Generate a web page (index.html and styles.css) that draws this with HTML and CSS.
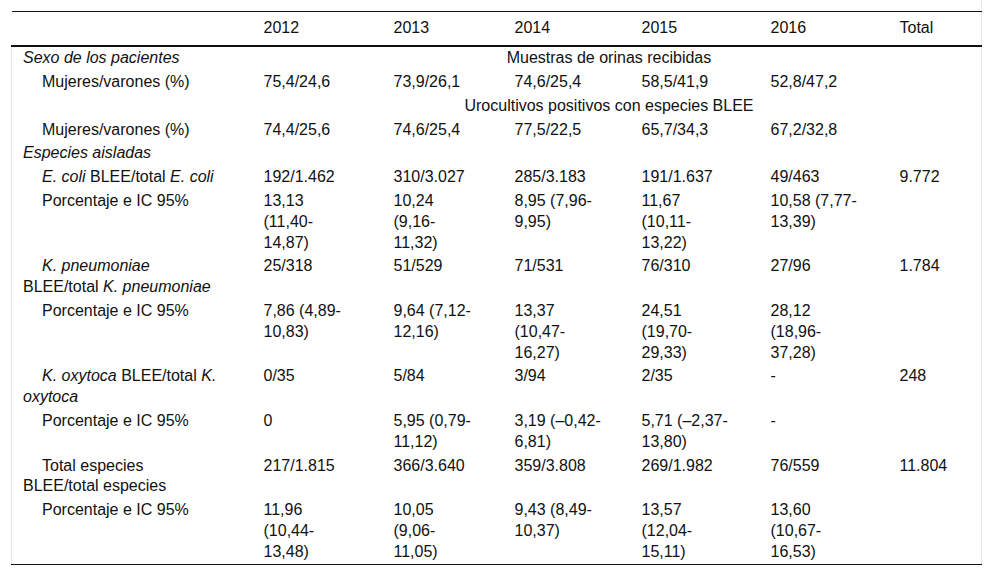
FILE: index.html
```html
<!DOCTYPE html>
<html lang="es">
<head>
<meta charset="utf-8">
<title>Tabla</title>
<link rel="stylesheet" href="styles.css">
</head>
<body>
<div class="wrap">
<table class="t">
<colgroup>
<col class="c-label"><col class="c-2012"><col class="c-2013"><col class="c-2014"><col class="c-2015"><col class="c-2016"><col class="c-total">
</colgroup>
<thead>
<tr><th class="lab"></th><th>2012</th><th>2013</th><th>2014</th><th>2015</th><th>2016</th><th>Total</th></tr>
</thead>
<tbody>
<tr><td class="lab"><i>Sexo de los pacientes</i></td><td class="span" colspan="6">Muestras de orinas recibidas</td></tr>
<tr><td class="lab sub">Mujeres/varones (%)</td><td>75,4/24,6</td><td>73,9/26,1</td><td>74,6/25,4</td><td>58,5/41,9</td><td>52,8/47,2</td><td></td></tr>
<tr><td class="lab"></td><td class="span" colspan="6">Urocultivos positivos con especies BLEE</td></tr>
<tr><td class="lab sub">Mujeres/varones (%)</td><td>74,4/25,6</td><td>74,6/25,4</td><td>77,5/22,5</td><td>65,7/34,3</td><td>67,2/32,8</td><td></td></tr>
<tr><td class="lab"><i>Especies aisladas</i></td><td></td><td></td><td></td><td></td><td></td><td></td></tr>
<tr><td class="lab sub"><i>E. coli</i> BLEE/total <i>E. coli</i></td><td>192/1.462</td><td>310/3.027</td><td>285/3.183</td><td>191/1.637</td><td>49/463</td><td>9.772</td></tr>
<tr><td class="lab sub">Porcentaje e IC 95%</td><td>13,13 (11,40-14,87)</td><td>10,24 (9,16-11,32)</td><td>8,95 (7,96-9,95)</td><td>11,67 (10,11-13,22)</td><td>10,58 (7,77-13,39)</td><td></td></tr>
<tr><td class="lab sub"><i>K. pneumoniae</i> BLEE/total <i>K. pneumoniae</i></td><td>25/318</td><td>51/529</td><td>71/531</td><td>76/310</td><td>27/96</td><td>1.784</td></tr>
<tr><td class="lab sub">Porcentaje e IC 95%</td><td>7,86 (4,89-10,83)</td><td>9,64 (7,12-12,16)</td><td>13,37 (10,47-16,27)</td><td>24,51 (19,70-29,33)</td><td>28,12 (18,96-37,28)</td><td></td></tr>
<tr><td class="lab sub"><i>K. oxytoca</i> BLEE/total <i>K. oxytoca</i></td><td>0/35</td><td>5/84</td><td>3/94</td><td>2/35</td><td>-</td><td>248</td></tr>
<tr><td class="lab sub">Porcentaje e IC 95%</td><td>0</td><td>5,95 (0,79-11,12)</td><td>3,19 (–0,42-6,81)</td><td>5,71 (–2,37-13,80)</td><td>-</td><td></td></tr>
<tr><td class="lab sub">Total especies BLEE/total especies</td><td>217/1.815</td><td>366/3.640</td><td>359/3.808</td><td>269/1.982</td><td>76/559</td><td>11.804</td></tr>
<tr><td class="lab sub">Porcentaje e IC 95%</td><td>11,96 (10,44-13,48)</td><td>10,05 (9,06-11,05)</td><td>9,43 (8,49-10,37)</td><td>13,57 (12,04-15,11)</td><td>13,60 (10,67-16,53)</td><td></td></tr>
</tbody>
</table>
</div>
</body>
</html>
```

FILE: styles.css
```css
html, body {
  margin: 0;
  padding: 0;
  background: #fff;
}
body {
  font-family: "Liberation Sans", Arial, sans-serif;
  font-size: 16px;
  color: #111;
}
.wrap {
  width: 970px;
  margin-left: 11px;
  padding-top: 11px;
  border-right: 1px solid #e6e6e6;
}
.t {
  width: 970px;
  table-layout: fixed;
  border-collapse: collapse;
  border-spacing: 0;
  line-height: 20.8px;
}
.c-label { width: 241px; }
.c-2012 { width: 130px; }
.c-2013 { width: 121px; }
.c-2014 { width: 127px; }
.c-2015 { width: 129px; }
.c-2016 { width: 129px; }
.c-total { width: 93px; }
.t th {
  font-weight: normal;
  text-align: left;
  vertical-align: top;
  padding: 6px 27px 6px 11px;
  border-top: 1px solid #111;
  border-bottom: 2px solid #111;
}
.t td {
  text-align: left;
  vertical-align: top;
  padding: 1.5px 27px 1.5px 11px;
}
.t td.lab, .t th.lab {
  padding-right: 32px;
}
.t tbody td.lab {
  border-left: 1px solid #e6e6e6;
}
.t td.sub {
  text-indent: 19px;
}
.t td.span {
  text-align: center;
}
.t tbody tr:last-child td {
  border-bottom: 1px solid #111;
}
```
